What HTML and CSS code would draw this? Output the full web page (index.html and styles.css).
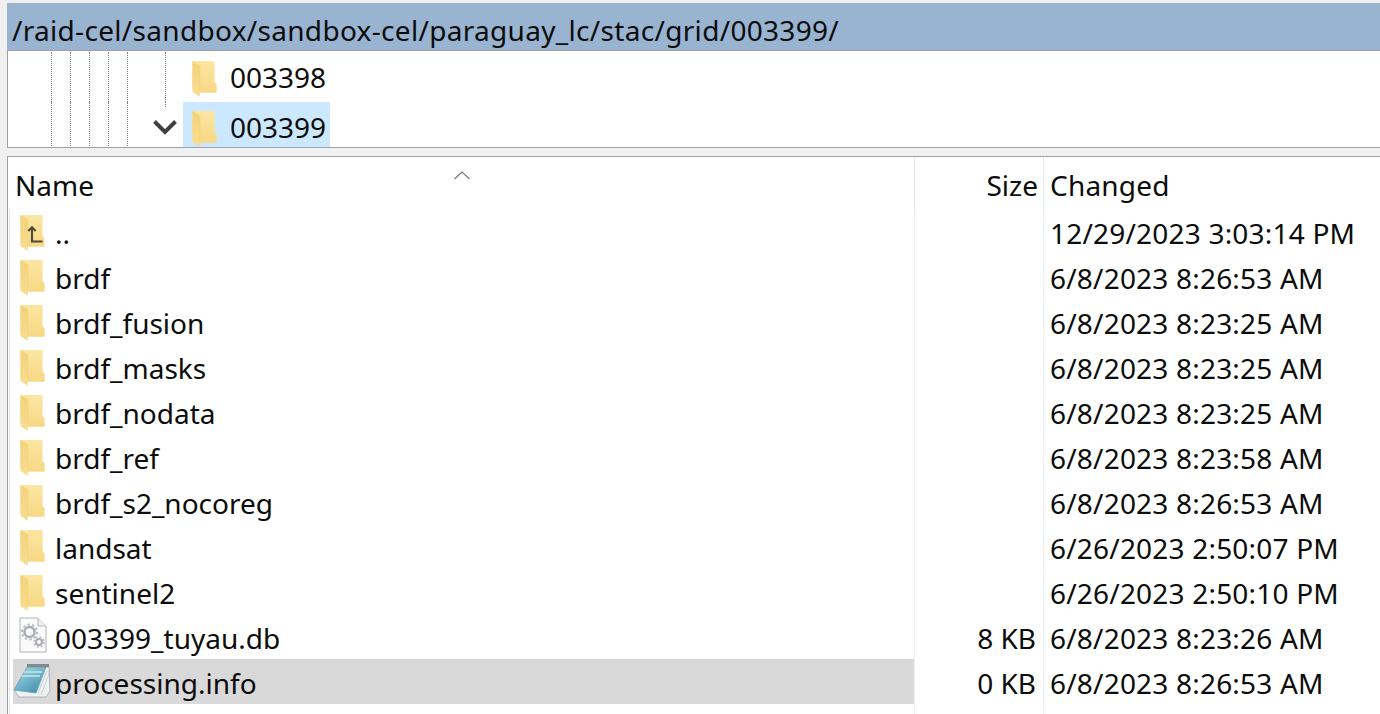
FILE: index.html
```html
<!DOCTYPE html>
<html lang="en">

<head>
    <meta charset="UTF-8">
    <title>003399</title>
    <link rel="stylesheet" href="styles.css">
</head>

<body>
    <svg class="defs" width="0" height="0">
        <defs>
            <linearGradient id="folderBack" x1="0" y1="0" x2="0" y2="1">
                <stop offset="0" stop-color="#fbe6a2"/>
                <stop offset="1" stop-color="#f7d884"/>
            </linearGradient>
            <linearGradient id="folderFlap" x1="0" y1="0" x2="0" y2="1">
                <stop offset="0" stop-color="#f3d27c"/>
                <stop offset="1" stop-color="#f8dd92"/>
            </linearGradient>
            <linearGradient id="padBlue" x1="0" y1="0" x2="0.8" y2="1">
                <stop offset="0" stop-color="#a9dde6"/>
                <stop offset="1" stop-color="#3f8fae"/>
            </linearGradient>
            <symbol id="folder" viewBox="0 0 24 36">
                <path d="M1 1H22V21L24 23V31H8V27H1Z" fill="url(#folderBack)"/>
                <path d="M1 1L8 5V35L1 30Z" fill="url(#folderFlap)"/>
                <path d="M8 5V31" stroke="#f3cf74" stroke-width="0.8"/>
            </symbol>
        </defs>
    </svg>

    <div class="path-bar">/raid-cel/sandbox/sandbox-cel/paraguay_lc/stac/grid/003399/</div>

    <div class="tree">
        <div class="tree-row">
            <span class="guide-pad"></span>
            <span class="guide"></span><span class="guide"></span><span class="guide"></span><span class="guide"></span>
            <span class="guide wide"></span>
            <span class="guide last"></span>
            <span class="tree-item">
                <svg class="folder-icon"><use href="#folder"/></svg>
                003398
            </span>
        </div>
        <div class="tree-row">
            <span class="guide-pad"></span>
            <span class="guide"></span><span class="guide"></span><span class="guide"></span><span class="guide"></span>
            <span class="guide wide"></span>
            <span class="chevron-box">
                <svg width="24" height="16" viewBox="0 0 24 16"><path d="M1.500 2.500L12 13L22.500 2.500" fill="none" stroke="#404040" stroke-width="4"/></svg>
            </span>
            <span class="tree-item selected">
                <svg class="folder-icon"><use href="#folder"/></svg>
                003399
            </span>
        </div>
    </div>

    <div class="files">
        <div class="file-row head">
            <div class="col-name">Name
                <svg class="sort-arrow" width="18" height="10" viewBox="0 0 18 10"><path d="M1.5 9L9 2L16.5 9" fill="none" stroke="#777" stroke-width="1.2"/></svg>
            </div>
            <div class="col-size">Size</div>
            <div class="col-date">Changed</div>
        </div>

        <div class="file-row">
            <div class="col-name">
                <svg class="file-icon" width="26" height="38" viewBox="0 0 24 36">
                    <use href="#folder"/>
                    <path d="M12 12.500V26H22M8.500 16L12 12.500L15.500 16" fill="none" stroke="#4d4a3c" stroke-width="2"/>
                </svg>
                ..
            </div>
            <div class="col-size"></div>
            <div class="col-date">12/29/2023 3:03:14 PM</div>
        </div>
        <div class="file-row">
            <div class="col-name"><svg class="file-icon" width="26" height="38"><use href="#folder"/></svg>brdf</div>
            <div class="col-size"></div>
            <div class="col-date">6/8/2023 8:26:53 AM</div>
        </div>
        <div class="file-row">
            <div class="col-name"><svg class="file-icon" width="26" height="38"><use href="#folder"/></svg>brdf_fusion</div>
            <div class="col-size"></div>
            <div class="col-date">6/8/2023 8:23:25 AM</div>
        </div>
        <div class="file-row">
            <div class="col-name"><svg class="file-icon" width="26" height="38"><use href="#folder"/></svg>brdf_masks</div>
            <div class="col-size"></div>
            <div class="col-date">6/8/2023 8:23:25 AM</div>
        </div>
        <div class="file-row">
            <div class="col-name"><svg class="file-icon" width="26" height="38"><use href="#folder"/></svg>brdf_nodata</div>
            <div class="col-size"></div>
            <div class="col-date">6/8/2023 8:23:25 AM</div>
        </div>
        <div class="file-row">
            <div class="col-name"><svg class="file-icon" width="26" height="38"><use href="#folder"/></svg>brdf_ref</div>
            <div class="col-size"></div>
            <div class="col-date">6/8/2023 8:23:58 AM</div>
        </div>
        <div class="file-row">
            <div class="col-name"><svg class="file-icon" width="26" height="38"><use href="#folder"/></svg>brdf_s2_nocoreg</div>
            <div class="col-size"></div>
            <div class="col-date">6/8/2023 8:26:53 AM</div>
        </div>
        <div class="file-row">
            <div class="col-name"><svg class="file-icon" width="26" height="38"><use href="#folder"/></svg>landsat</div>
            <div class="col-size"></div>
            <div class="col-date">6/26/2023 2:50:07 PM</div>
        </div>
        <div class="file-row">
            <div class="col-name"><svg class="file-icon" width="26" height="38"><use href="#folder"/></svg>sentinel2</div>
            <div class="col-size"></div>
            <div class="col-date">6/26/2023 2:50:10 PM</div>
        </div>
        <div class="file-row">
            <div class="col-name">
                <svg class="file-icon gear" width="28" height="36" viewBox="0 0 28 36">
                    <path d="M1 1H19L27 9V35H1Z" fill="#fbfbfb" stroke="#b4b4b4"/>
                    <path d="M19 1V9H27" fill="#eee" stroke="#b4b4b4"/>
                    <circle cx="10.500" cy="15" r="5" fill="none" stroke="#a8adb3" stroke-width="2.500"/>
                    <circle cx="10.500" cy="15" r="7.500" fill="none" stroke="#b9bdc2" stroke-width="2" stroke-dasharray="2.500 2.200"/>
                    <circle cx="20" cy="25" r="3" fill="none" stroke="#a8adb3" stroke-width="2"/>
                    <circle cx="20" cy="25" r="5" fill="none" stroke="#b9bdc2" stroke-width="1.600" stroke-dasharray="2 1.900"/>
                </svg>
                003399_tuyau.db
            </div>
            <div class="col-size value">8 KB</div>
            <div class="col-date">6/8/2023 8:23:26 AM</div>
        </div>
        <div class="file-row">
            <div class="col-name selected-row">
                <svg class="file-icon pad" width="38" height="36" viewBox="0 0 38 36">
                    <path d="M33 5H36L37 29L33 35H6L1 28Z" fill="#eef2f3" stroke="#9aa8ad" stroke-width="0.800"/>
                    <path d="M14 5H33L23 31L1 28Z" fill="url(#padBlue)" stroke="#6a9cae" stroke-width="0.800"/>
                    <path d="M14 2H36V5H14Z" fill="#7f8b90"/>
                    <path d="M25 31L34 9M28 33L36 12" stroke="#b8c4c8" stroke-width="0.800"/>
                    <path d="M11 10L29 10M8.500 14L27 14" stroke="#c2e8ee" stroke-width="1.600"/>
                </svg>
                processing.info
            </div>
            <div class="col-size value">0 KB</div>
            <div class="col-date">6/8/2023 8:26:53 AM</div>
        </div>
        <div class="file-row filler">
            <div class="col-name"></div>
            <div class="col-size"></div>
            <div class="col-date"></div>
        </div>
    </div>
</body>

</html>
```

FILE: styles.css
```css
html,
body {
    height: 100%;
}

body {
    margin: 0;
    padding: 3px 0 0 7px;
    box-sizing: border-box;
    overflow: hidden;
    display: flex;
    flex-direction: column;
    font-family: "Noto Sans", "Open Sans", sans-serif;
    font-size: 28px;
    color: #0c0c0c;
    background-color: #f0f0f0;
}

.defs {
    position: absolute;
}

.path-bar {
    flex: none;
    height: 47px;
    line-height: 54px;
    padding-left: 5px;
    white-space: nowrap;
    letter-spacing: 0.31px;
    background-color: #99b4d1;
}

/* tree */
.tree {
    flex: none;
    height: 95px;
    padding-top: 1px;
    overflow: hidden;
    background-color: #ffffff;
    border: 1px solid #a0a0a0;
    border-right: 0;
    box-sizing: content-box;
}

.tree-row {
    display: flex;
    height: 50px;
}

.guide-pad {
    width: 43px;
}

.guide {
    width: 19px;
    border-left: 1px dotted #808080;
    box-sizing: border-box;
}

.guide.wide {
    width: 38px;
}

.guide.last {
    width: 18px;
}

.chevron-box {
    position: relative;
    flex: none;
    width: 30px;
    margin-left: -12px;
    display: flex;
    align-items: center;
}

.chevron-box::before {
    content: "";
    position: absolute;
    left: 12px;
    top: 0;
    height: 5px;
    border-left: 1px dotted #808080;
}

.tree-item {
    display: flex;
    align-items: center;
    gap: 13px;
    padding: 0 4px 0 8px;
    line-height: 52px;
}

.selected {
    background-color: #cce8ff;
}

.folder-icon {
    width: 26px;
    height: 38px;
    margin-top: 3px;
}

/* file list */
.files {
    flex: 1;
    min-height: 0;
    overflow: hidden;
    margin-top: 8px;
    padding-left: 5px;
    background-color: #ffffff;
    border-top: 1px solid #a0a0a0;
    border-left: 1px solid #a0a0a0;
}

.file-row {
    display: grid;
    grid-template-columns: 901px 130px 1fr;
    height: 45px;
    box-shadow: -3px 0 0 #ffffff, -4px 0 0 #e3e9f0;
}

.file-row > div {
    box-sizing: border-box;
    padding-top: 4px;
    line-height: 41px;
}

.file-row.head {
    height: 52px;
    box-shadow: none;
}

.file-row.head > div {
    padding-top: 0;
    line-height: 56px;
}

.col-name {
    position: relative;
    display: flex;
    align-items: center;
    white-space: nowrap;
    padding-left: 42px;
}

.head .col-name {
    padding-left: 2px;
}

.sort-arrow {
    position: absolute;
    left: 440px;
    top: 13px;
}

.file-icon {
    position: absolute;
    left: 6px;
    top: 5px;
}

.file-icon.gear,
.file-icon.pad {
    top: 3px;
}

.file-icon.pad {
    left: 0;
}

.selected-row {
    background-color: #d9d9d9;
}

.col-size {
    text-align: right;
    padding-right: 5px;
    border-left: 1px solid #eef2f6;
    border-right: 1px solid #eef2f6;
}

.col-size.value {
    padding-right: 7px;
}

.head .col-size {
    border-color: #e3e8ee;
}

.col-date {
    padding-left: 6px;
    white-space: nowrap;
    letter-spacing: 0.2px;
}
```
